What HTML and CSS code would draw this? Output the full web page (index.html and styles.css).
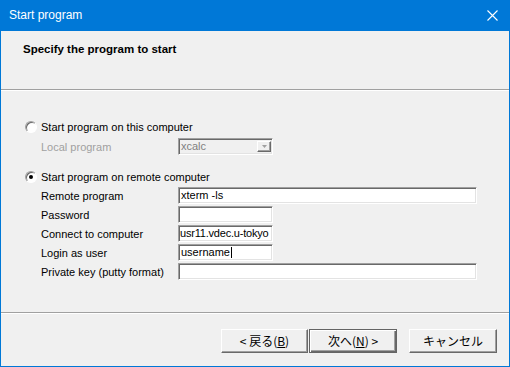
FILE: index.html
```html
<!DOCTYPE html>
<html lang="en">
    <head>
        <meta charset="UTF-8" />
        <link rel="stylesheet" href="styles.css">
        <title>Start program</title>
    </head>

    <body>
        <div class="window">
            <div class="titlebar">
                <span class="title">Start program</span>
                <svg class="close" width="11" height="11" viewBox="0 0 11 11">
                    <path d="M0.5 0.5 L10.5 10.5 M10.5 0.5 L0.5 10.5" stroke="#fff" stroke-width="1.1" />
                </svg>
            </div>

            <section class="header">
                <h1>Specify the program to start</h1>
            </section>
            <div class="separator"></div>

            <section class="main">
                <div class="radio-row first">
                    <span class="radio"></span>
                    <span>Start program on this computer</span>
                </div>
                <div class="field-row local">
                    <span class="label disabled">Local program</span>
                    <div class="combo">
                        <span class="combo-text">xcalc</span>
                        <span class="combo-button">
                            <svg width="7" height="4" viewBox="0 0 7 4">
                                <path d="M1 0 H6 L3.5 3 Z" fill="#a0a0a0" />
                            </svg>
                        </span>
                    </div>
                </div>

                <div class="radio-row second">
                    <span class="radio checked"></span>
                    <span>Start program on remote computer</span>
                </div>
                <ul class="fields">
                    <li class="field-row">
                        <span class="label">Remote program</span>
                        <div class="input wide">xterm -ls</div>
                    </li>
                    <li class="field-row">
                        <span class="label">Password</span>
                        <div class="input"></div>
                    </li>
                    <li class="field-row">
                        <span class="label">Connect to computer</span>
                        <div class="input tight">usr11.vdec.u-tokyo</div>
                    </li>
                    <li class="field-row">
                        <span class="label">Login as user</span>
                        <div class="input">username<span class="caret"></span></div>
                    </li>
                    <li class="field-row">
                        <span class="label">Private key (putty format)</span>
                        <div class="input wide"></div>
                    </li>
                </ul>
            </section>

            <div class="separator"></div>
            <section class="footer">
                <button class="back">&lt; 戻る(<u>B</u>)</button>
                <button class="next default">次へ(<u>N</u>) &gt;</button>
                <button class="cancel">キャンセル</button>
            </section>
        </div>
    </body>
</html>
```

FILE: styles.css
```css
html,
body {
    margin: 0;
    padding: 0;
}

.window {
    width: 510px;
    height: 367px;
    box-sizing: border-box;
    border: 1px solid #0078d7;
    border-top: none;
    background-color: #f0f0f0;
    display: flex;
    flex-direction: column;
    font-family: "Liberation Sans", Arial, sans-serif;
    font-size: 11px;
    color: #000;
}

.titlebar {
    height: 31px;
    margin: 0 -1px;
    background-color: #0078d7;
    display: flex;
    align-items: center;
    justify-content: space-between;
    padding: 0 12px 0 9px;
    flex-shrink: 0;
}

.title {
    color: #fff;
    font-size: 12px;
    margin-top: -1px;
}

.close {
    display: block;
    margin-top: -1px;
}

.header {
    height: 58px;
    flex-shrink: 0;
}

.header h1 {
    margin: 0;
    padding: 10px 0 0 22px;
    font-size: 11.5px;
    font-weight: bold;
    line-height: 16px;
}

.separator {
    height: 1px;
    border-top: 1px solid #a0a0a0;
    background-color: #fff;
    flex-shrink: 0;
}

.main {
    flex: 1;
    padding: 30px 0 0 24px;
}

.radio-row {
    display: flex;
    align-items: center;
    gap: 4px;
    height: 12px;
}

.radio-row.second {
    margin-top: 16px;
}

.radio {
    width: 10px;
    height: 10px;
    border-radius: 50%;
    border: 1px solid;
    border-color: #a0a0a0 #fff #fff #a0a0a0;
    background-color: #fff;
    box-shadow: inset 1px 1px 0 #696969;
    position: relative;
    flex-shrink: 0;
}

.radio.checked:after {
    content: " ";
    position: absolute;
    width: 4px;
    height: 4px;
    border-radius: 50%;
    background: #000;
    left: 3px;
    top: 3px;
}

.field-row {
    display: flex;
    align-items: center;
    height: 17px;
    padding-left: 16px;
}

.field-row.local {
    margin-top: 5px;
}

.label {
    width: 137px;
    flex-shrink: 0;
}

.label.disabled {
    color: #a0a0a0;
}

.fields {
    list-style: none;
    margin: 4px 0 0;
    padding: 0;
    display: flex;
    flex-direction: column;
    gap: 2px;
}

.input,
.combo {
    box-sizing: border-box;
    width: 95px;
    height: 17px;
    border: 1px solid;
    border-color: #a0a0a0 #fff #fff #a0a0a0;
    box-shadow: inset 1px 1px 0 #696969, inset -1px -1px 0 #e3e3e3;
    background-color: #fff;
    padding: 0 2px;
    line-height: 15px;
    white-space: nowrap;
    overflow: hidden;
    display: flex;
    align-items: center;
}

.input.wide {
    width: 299px;
}

.input.tight {
    letter-spacing: -0.2px;
    padding-left: 1px;
}

.caret {
    display: inline-block;
    width: 1px;
    height: 11px;
    background: #000;
    margin-left: 1px;
}

.combo {
    background-color: #f0f0f0;
    color: #808080;
    justify-content: space-between;
    padding-right: 1px;
}

.combo-button {
    width: 14px;
    height: 11px;
    box-sizing: border-box;
    border: 1px solid;
    border-color: #fff #696969 #696969 #fff;
    box-shadow: inset -1px -1px 0 #a0a0a0;
    display: flex;
    align-items: center;
    justify-content: center;
}

.combo-button svg {
    display: block;
}

.footer {
    height: 52px;
    flex-shrink: 0;
    display: flex;
    justify-content: flex-end;
    align-items: flex-start;
    padding: 15px 12px 0 0;
    box-sizing: border-box;
}

.footer button {
    width: 87px;
    height: 24px;
    box-sizing: border-box;
    background-color: #f0f0f0;
    border: 1px solid;
    border-color: #fff #696969 #696969 #fff;
    box-shadow: inset -1px -1px 0 #a0a0a0;
    font-family: "Noto Sans CJK JP", sans-serif;
    font-size: 12px;
    color: #000;
    padding: 0;
    line-height: 20px;
}

.footer button u {
    text-decoration-thickness: 1px;
}

.footer button.default {
    width: 88px;
    margin-left: 1px;
    border: 1px solid #646464;
    box-shadow: inset 1px 1px 0 #fff, inset -1px -1px 0 #696969, inset -2px -2px 0 #a0a0a0;
}

.footer button.cancel {
    width: 88px;
    margin-left: 12px;
}
```
